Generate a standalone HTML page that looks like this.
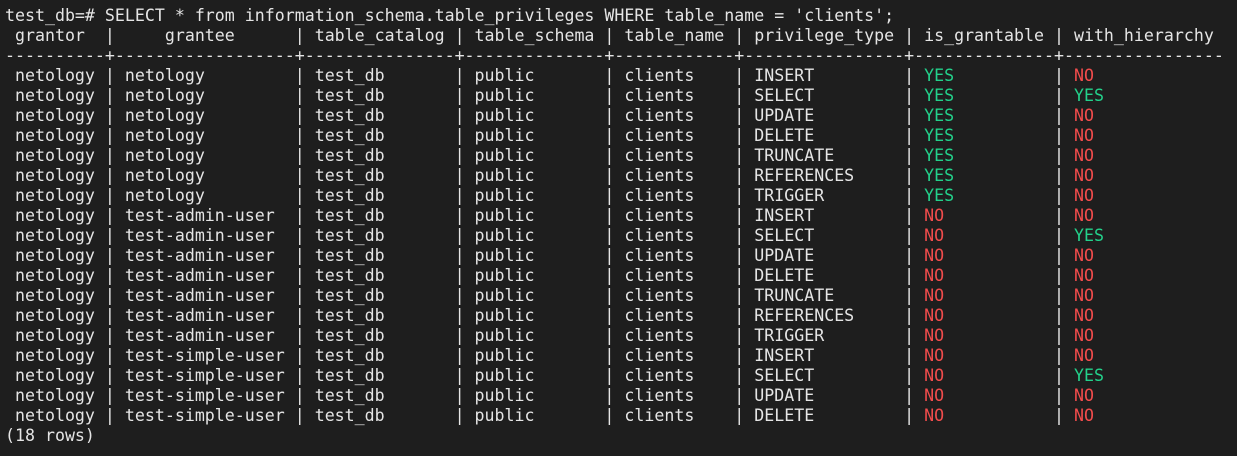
<!DOCTYPE html>
<html><head><meta charset="utf-8"><style>
html,body{margin:0;padding:0;background:#1e1e1e;width:1237px;height:456px;overflow:hidden}
pre{margin:0;padding:6px 0 0 5px;font-family:"DejaVu Sans Mono","Liberation Mono",monospace;font-size:16.6px;line-height:20px;color:#e5e5e5}
.g{color:#23d18b}.r{color:#f14c4c}
</style></head><body><pre>test_db=# SELECT * from information_schema.table_privileges WHERE table_name = 'clients';
 grantor  |     grantee      | table_catalog | table_schema | table_name | privilege_type | is_grantable | with_hierarchy
----------+------------------+---------------+--------------+------------+----------------+--------------+----------------
 netology | netology         | test_db       | public       | clients    | INSERT         | <span class="g">YES</span>          | <span class="r">NO</span>
 netology | netology         | test_db       | public       | clients    | SELECT         | <span class="g">YES</span>          | <span class="g">YES</span>
 netology | netology         | test_db       | public       | clients    | UPDATE         | <span class="g">YES</span>          | <span class="r">NO</span>
 netology | netology         | test_db       | public       | clients    | DELETE         | <span class="g">YES</span>          | <span class="r">NO</span>
 netology | netology         | test_db       | public       | clients    | TRUNCATE       | <span class="g">YES</span>          | <span class="r">NO</span>
 netology | netology         | test_db       | public       | clients    | REFERENCES     | <span class="g">YES</span>          | <span class="r">NO</span>
 netology | netology         | test_db       | public       | clients    | TRIGGER        | <span class="g">YES</span>          | <span class="r">NO</span>
 netology | test-admin-user  | test_db       | public       | clients    | INSERT         | <span class="r">NO</span>           | <span class="r">NO</span>
 netology | test-admin-user  | test_db       | public       | clients    | SELECT         | <span class="r">NO</span>           | <span class="g">YES</span>
 netology | test-admin-user  | test_db       | public       | clients    | UPDATE         | <span class="r">NO</span>           | <span class="r">NO</span>
 netology | test-admin-user  | test_db       | public       | clients    | DELETE         | <span class="r">NO</span>           | <span class="r">NO</span>
 netology | test-admin-user  | test_db       | public       | clients    | TRUNCATE       | <span class="r">NO</span>           | <span class="r">NO</span>
 netology | test-admin-user  | test_db       | public       | clients    | REFERENCES     | <span class="r">NO</span>           | <span class="r">NO</span>
 netology | test-admin-user  | test_db       | public       | clients    | TRIGGER        | <span class="r">NO</span>           | <span class="r">NO</span>
 netology | test-simple-user | test_db       | public       | clients    | INSERT         | <span class="r">NO</span>           | <span class="r">NO</span>
 netology | test-simple-user | test_db       | public       | clients    | SELECT         | <span class="r">NO</span>           | <span class="g">YES</span>
 netology | test-simple-user | test_db       | public       | clients    | UPDATE         | <span class="r">NO</span>           | <span class="r">NO</span>
 netology | test-simple-user | test_db       | public       | clients    | DELETE         | <span class="r">NO</span>           | <span class="r">NO</span>
(18 rows)
</pre></body></html>
